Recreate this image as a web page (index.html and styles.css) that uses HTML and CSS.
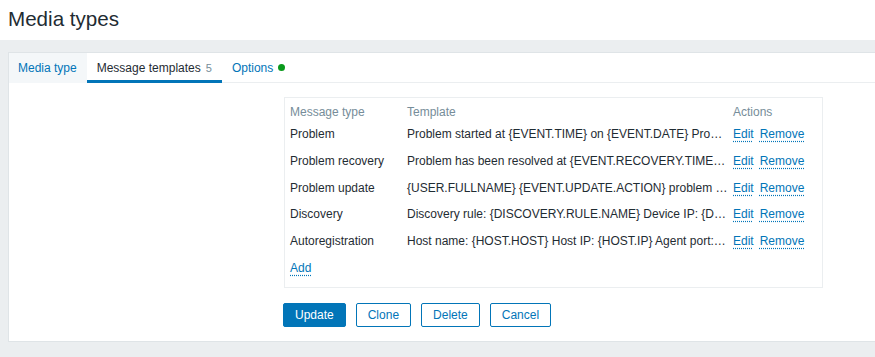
FILE: index.html
```html
<!DOCTYPE html>
<html lang="en">
<head>
    <meta charset="UTF-8">
    <title>Media types</title>
    <link rel="stylesheet" href="styles.css">
</head>
<body>
    <header class="page-header">
        <h1>Media types</h1>
    </header>

    <main class="wrapper">
        <div class="card">
            <ul class="tabs">
                <li class="tab">Media type</li>
                <li class="tab active">Message templates <span class="count">5</span></li>
                <li class="tab">Options <span class="dot"></span></li>
            </ul>

            <div class="form">
                <div class="templates">
                    <div class="row head">
                        <div class="col-type">Message type</div>
                        <div class="col-tpl">Template</div>
                        <div class="col-act">Actions</div>
                    </div>
                    <div class="row">
                        <div class="col-type">Problem</div>
                        <div class="col-tpl">Problem started at {EVENT.TIME} on {EVENT.DATE} Pro…</div>
                        <div class="col-act"><a href="#" class="link">Edit</a><a href="#" class="link">Remove</a></div>
                    </div>
                    <div class="row">
                        <div class="col-type">Problem recovery</div>
                        <div class="col-tpl">Problem has been resolved at {EVENT.RECOVERY.TIME…</div>
                        <div class="col-act"><a href="#" class="link">Edit</a><a href="#" class="link">Remove</a></div>
                    </div>
                    <div class="row">
                        <div class="col-type">Problem update</div>
                        <div class="col-tpl">{USER.FULLNAME} {EVENT.UPDATE.ACTION} problem …</div>
                        <div class="col-act"><a href="#" class="link">Edit</a><a href="#" class="link">Remove</a></div>
                    </div>
                    <div class="row">
                        <div class="col-type">Discovery</div>
                        <div class="col-tpl">Discovery rule: {DISCOVERY.RULE.NAME} Device IP: {D…</div>
                        <div class="col-act"><a href="#" class="link">Edit</a><a href="#" class="link">Remove</a></div>
                    </div>
                    <div class="row">
                        <div class="col-type">Autoregistration</div>
                        <div class="col-tpl">Host name: {HOST.HOST} Host IP: {HOST.IP} Agent port:…</div>
                        <div class="col-act"><a href="#" class="link">Edit</a><a href="#" class="link">Remove</a></div>
                    </div>
                    <div class="row">
                        <div class="col-type"><a href="#" class="link">Add</a></div>
                    </div>
                </div>

                <div class="buttons">
                    <button class="btn primary">Update</button>
                    <button class="btn">Clone</button>
                    <button class="btn">Delete</button>
                    <button class="btn">Cancel</button>
                </div>
            </div>
        </div>
    </main>
</body>
</html>
```

FILE: styles.css
```css
:root {
    --text: #1f2c33;
    --muted: #768d99;
    --link: #0275b8;
    --page: #ebeef0;
    --line: #dfe4e7;
}

* {
    margin: 0;
    padding: 0;
    box-sizing: border-box;
}

body {
    font-family: "Liberation Sans", Arial, sans-serif;
    font-size: 12px;
    color: var(--text);
    background: var(--page);
    height: 357px;
    overflow: hidden;
}

.page-header {
    height: 40px;
    background: #fff;
    padding: 7px 0 0 8px;
}

.page-header h1 {
    font-size: 20.6px;
    font-weight: normal;
    line-height: 24px;
}

.wrapper {
    padding: 12px 0 0 8px;
}

.card {
    background: #fff;
    border: 1px solid var(--line);
    border-right: none;
    height: 290px;
}

.tabs {
    list-style: none;
    display: flex;
    height: 30px;
    border-bottom: 1px solid var(--page);
}

.tab {
    display: flex;
    align-items: center;
    padding: 0 10px;
    color: var(--link);
    height: 30px;
    border-bottom: 3px solid transparent;
    padding-top: 2px;
}

.tab:first-child {
    background: #f4f7f9;
    padding-left: 9px;
}

.tab.active {
    color: var(--text);
    border-bottom-color: var(--link);
}

.count {
    color: var(--muted);
    font-size: 11px;
    margin-left: 5px;
}

.dot {
    display: inline-block;
    width: 7px;
    height: 7px;
    border-radius: 50%;
    background: #0a9a1c;
    margin-left: 5px;
}

.form {
    padding: 14px 0 0 275px;
}

.templates {
    width: 539px;
    border: 1px solid var(--page);
    padding: 0 5px 5px;
}

.row {
    display: flex;
    line-height: 26.75px;
    white-space: nowrap;
}

.row.head {
    color: var(--muted);
    line-height: 16px;
    padding-top: 6px;
    padding-bottom: 1px;
}

.col-type {
    width: 117px;
}

.col-tpl {
    width: 326px;
}

.link {
    color: var(--link);
    text-decoration: underline dotted;
    text-underline-offset: 3px;
}

.col-act .link + .link {
    margin-left: 6px;
}

.buttons {
    display: flex;
    gap: 10px;
    margin-top: 15px;
    margin-left: -1px;
}

.btn {
    height: 24px;
    padding: 0 11px;
    font-family: inherit;
    font-size: 12px;
    color: var(--link);
    background: #fff;
    border: 1px solid var(--link);
    border-radius: 2px;
    cursor: pointer;
}

.btn.primary {
    background: var(--link);
    color: #fff;
}
```
